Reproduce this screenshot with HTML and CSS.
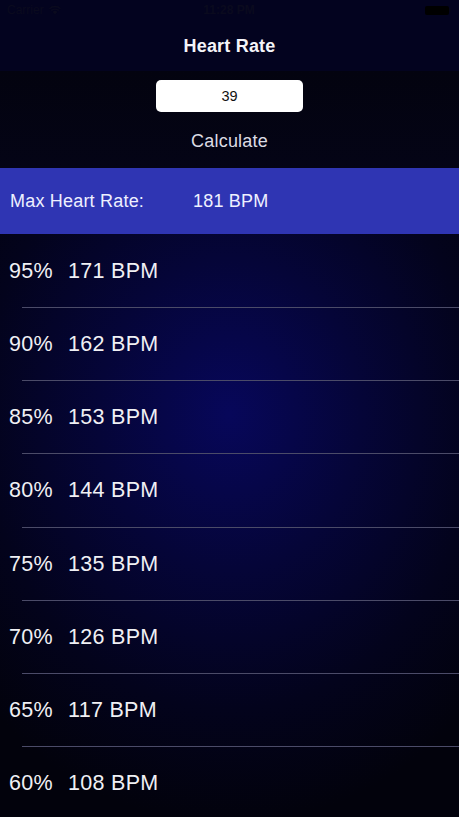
FILE: index.html
```html
<!DOCTYPE html>
<html>
<head>
<meta charset="utf-8">
<link rel="stylesheet" href="styles.css">
</head>
<body>
<div class="screen">
  <div class="topbar">
    <div class="status">
      <div class="status-left">
        <span class="carrier">Carrier</span>
        <svg class="wifi" width="14" height="10" viewBox="0 0 14 10"><path d="M7 9.5 L4.6 6.9 A3.4 3.4 0 0 1 9.4 6.9 Z M2.9 5.1 A5.8 5.8 0 0 1 11.1 5.1 L10.2 6.1 A4.5 4.5 0 0 0 3.8 6.1 Z M1.1 3.2 A8.4 8.4 0 0 1 12.9 3.2 L12 4.2 A7.1 7.1 0 0 0 2 4.2 Z" fill="#0a0a1e"/></svg>
      </div>
      <span class="time">11:28 PM</span>
      <div class="battery"><div class="battery-body"></div><div class="battery-tip"></div></div>
    </div>
    <div class="navbar">Heart Rate</div>
  </div>
  <div class="content">
    <div class="form">
      <div class="age-input">39</div>
      <div class="calc">Calculate</div>
    </div>
    <div class="max-bar">
      <span class="max-label">Max Heart Rate:</span>
      <span class="max-value">181 BPM</span>
    </div>
    <div class="list">
      <div class="row"><span class="pct">95%</span><span>171 BPM</span></div>
      <div class="sep"></div>
      <div class="row"><span class="pct">90%</span><span>162 BPM</span></div>
      <div class="sep"></div>
      <div class="row"><span class="pct">85%</span><span>153 BPM</span></div>
      <div class="sep"></div>
      <div class="row"><span class="pct">80%</span><span>144 BPM</span></div>
      <div class="sep"></div>
      <div class="row"><span class="pct">75%</span><span>135 BPM</span></div>
      <div class="sep"></div>
      <div class="row"><span class="pct">70%</span><span>126 BPM</span></div>
      <div class="sep"></div>
      <div class="row"><span class="pct">65%</span><span>117 BPM</span></div>
      <div class="sep"></div>
      <div class="row"><span class="pct">60%</span><span>108 BPM</span></div>
    </div>
  </div>
</div>
</body>
</html>
```
FILE: styles.css
```css
html, body {
  margin: 0;
  padding: 0;
  background: #02020a;
}
.screen {
  width: 459px;
  height: 817px;
  overflow: hidden;
  font-family: "Liberation Sans", Arial, sans-serif;
  color: #f2f2f5;
  display: flex;
  flex-direction: column;
}
.topbar {
  background: #03031f;
  height: 71px;
  flex-shrink: 0;
  display: flex;
  flex-direction: column;
}
.status {
  height: 20px;
  flex-shrink: 0;
  display: flex;
  align-items: center;
  justify-content: space-between;
  padding: 0 8px 0 7px;
  font-size: 12px;
  color: #0a0a1e;
}
.status-left {
  display: flex;
  align-items: center;
  gap: 4px;
  width: 100px;
}
.carrier { font-size: 12px; }
.time { font-weight: bold; font-size: 12px; }
.battery {
  width: 100px;
  display: flex;
  justify-content: flex-end;
  align-items: center;
}
.battery-body {
  width: 24px;
  height: 9px;
  background: #000;
  border-radius: 2px;
}
.battery-tip {
  width: 2px;
  height: 4px;
  background: #05051a;
}
.navbar {
  flex: 1;
  display: flex;
  align-items: center;
  justify-content: center;
  font-size: 18px;
  font-weight: bold;
  letter-spacing: 0.2px;
  color: #f4f4f8;
  padding-top: 1px;
}
.content {
  flex: 1;
  min-height: 0;
  overflow: hidden;
  background: radial-gradient(ellipse 75% 55% at 50% 46%, #07075a 0%, #050538 38%, #03031c 72%, #02020c 100%);
  display: flex;
  flex-direction: column;
}
.form {
  height: 97px;
  flex-shrink: 0;
  display: flex;
  flex-direction: column;
  align-items: center;
  background: linear-gradient(#03030f, #040416);
}
.age-input {
  margin-top: 9px;
  width: 147px;
  height: 32px;
  background: #fff;
  border-radius: 5px;
  color: #111;
  font-size: 14.5px;
  display: flex;
  align-items: center;
  justify-content: center;
}
.calc {
  margin-top: 19px;
  font-size: 18px;
  letter-spacing: 0.2px;
  color: #dcdce4;
}
.max-bar {
  height: 66px;
  flex-shrink: 0;
  background: #2f35b3;
  display: flex;
  align-items: center;
  padding-top: 1px;
  box-sizing: border-box;
  font-size: 18px;
  letter-spacing: 0.2px;
  color: #eef0ff;
}
.max-label {
  margin-left: 10px;
  width: 183px;
}
.list {
  display: flex;
  flex-direction: column;
  flex-shrink: 0;
  padding-top: 1px;
}
.row {
  height: 72.15px;
  flex-shrink: 0;
  display: flex;
  align-items: center;
  padding-left: 9px;
  padding-top: 1px;
  box-sizing: border-box;
  font-size: 21.5px;
  letter-spacing: 0.3px;
  color: #f0f0f4;
}
.pct {
  width: 59px;
}
.sep {
  height: 1px;
  flex-shrink: 0;
  margin-left: 22px;
  background: #4b4b68;
}
```
